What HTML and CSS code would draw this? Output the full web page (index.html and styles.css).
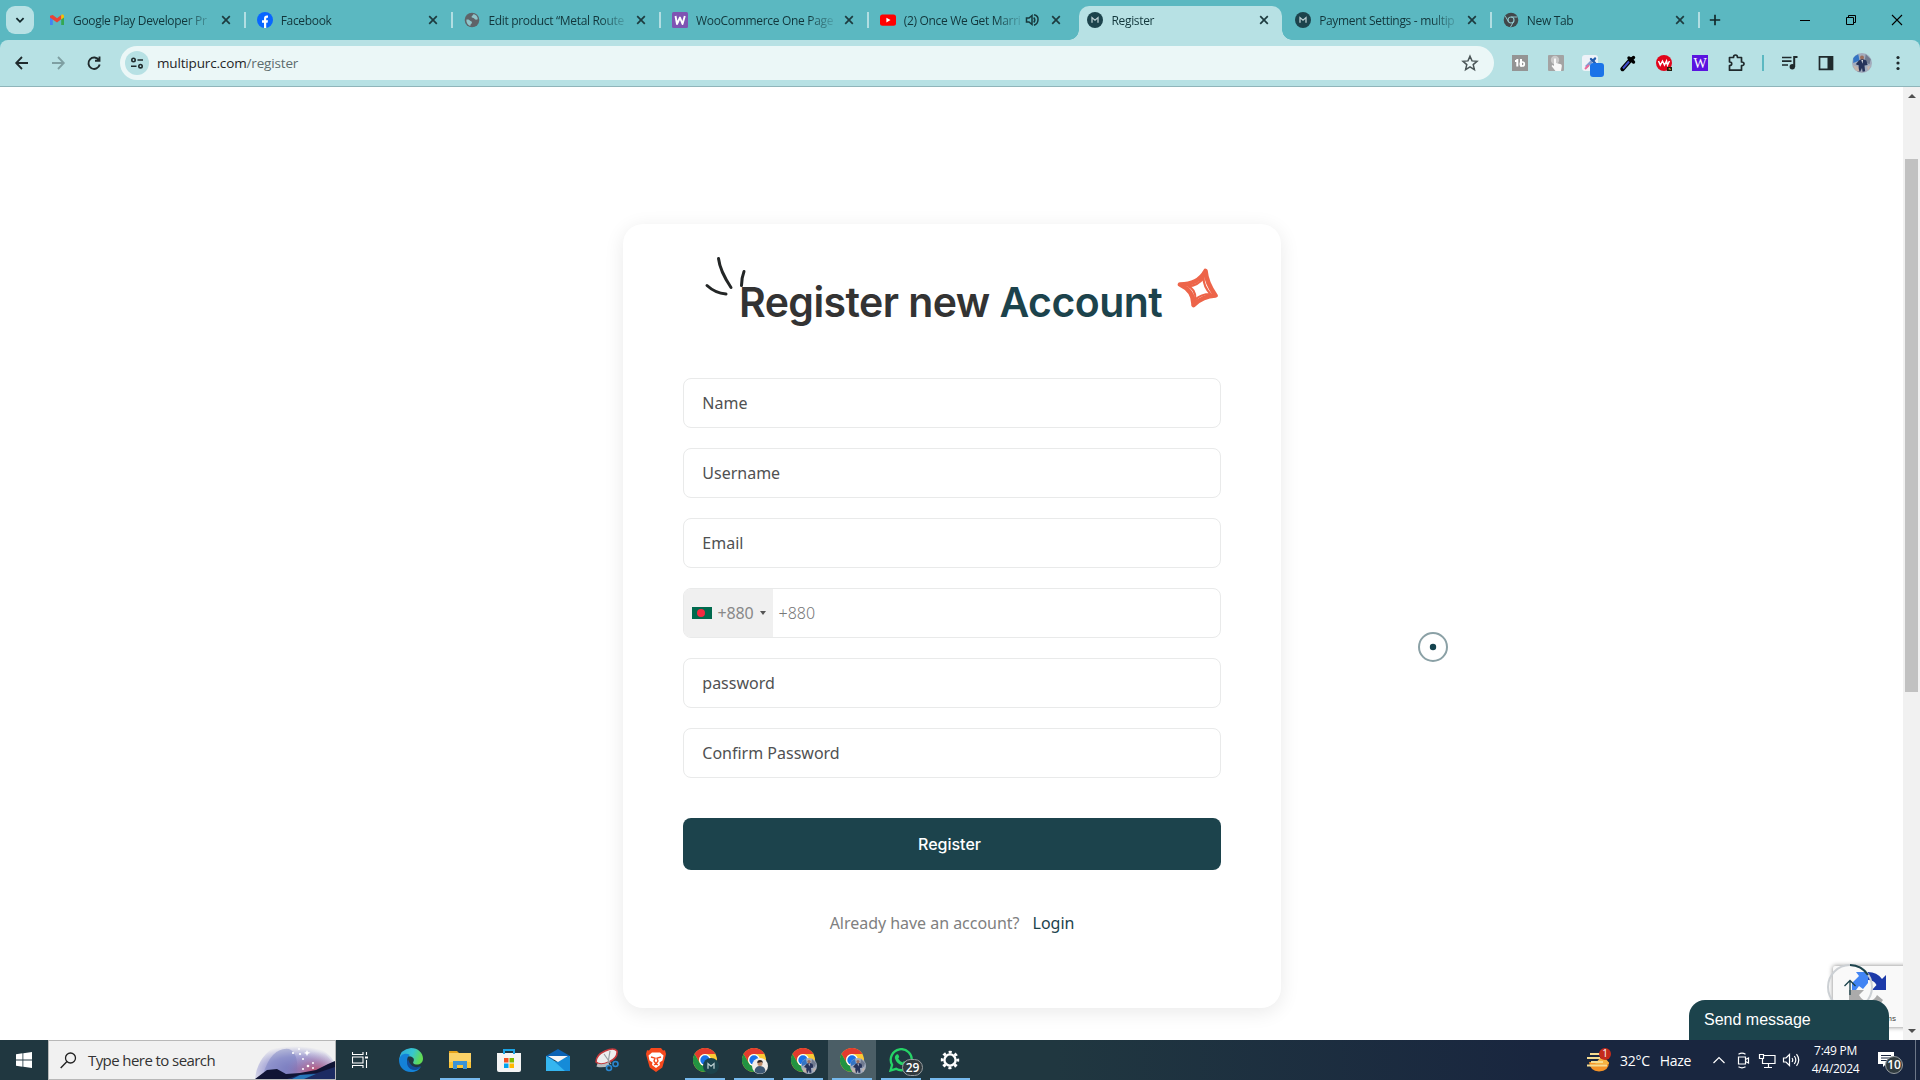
FILE: index.html
```html
<!DOCTYPE html>
<html lang="en">
<head>
<meta charset="utf-8">
<title>Register</title>
<link rel="stylesheet" href="styles.css">
</head>
<body>
<svg class="defs" aria-hidden="true">
  <symbol id="x" viewBox="0 0 16 16"><path d="M4.2 4.2l7.6 7.6M11.8 4.2l-7.6 7.6" stroke="#1d3b3f" stroke-width="1.7" fill="none"/></symbol>
  <symbol id="m" viewBox="0 0 16 16"><circle cx="8" cy="8" r="8" fill="#1c434c"/><path d="M5 10.800V5.600L8 8.200l3-2.600v5.200" fill="none" stroke="#b9cdd0" stroke-width="1.300"/></symbol>
  <symbol id="chrome" viewBox="0 0 24 24">
    <circle cx="12" cy="12" r="12" fill="#fcc934"/>
    <path d="M1.6 6A12 12 0 0 1 22.4 6H12a6 6 0 0 0-5.2 9z" fill="#e33b2e"/>
    <path d="M1.6 6A12 12 0 0 0 12 24l5.2-9A6 6 0 0 1 6.8 15z" fill="#229342"/>
    <circle cx="12" cy="12" r="6" fill="#fff"/><circle cx="12" cy="12" r="4.7" fill="#1a73e8"/>
  </symbol>
  <symbol id="photo" viewBox="0 0 16 16">
    <circle cx="8" cy="8" r="8" fill="#a3acbd"/><path d="M1 4a8 8 0 0 1 4-3l1 5-5 2z" fill="#3474c4"/><path d="M11 1l4 4-1 4-4-2z" fill="#6f7a90"/>
    <path d="M5.500 6l2.500-1.500 3.500 1.500 1 3.500-2.500.5.500 4.500-2 .5-.5-3-1.500 3-2-.5 1-4.500-2.500-1z" fill="#26335a"/><path d="M7.500 5.500h1.300l-.5 3z" fill="#e6e8ee"/><circle cx="8" cy="3.600" r="1.600" fill="#9b6e5d"/><path d="M1 10l4 1 1 4-3-1zM12 11l3-1-2 4z" fill="#c5b3a9"/>
  </symbol>
</svg>

<header class="browser">
  <div class="tabstrip">
    <button class="tabsearch"><svg width="12" height="12" viewBox="0 0 12 12"><path d="M2.4 4.2L6 7.8l3.6-3.6" fill="none" stroke="#12282b" stroke-width="1.8"/></svg></button>
    <div class="tab"><svg class="fav" viewBox="0 0 16 16"><path d="M1 3.5v9.500h2.800V7z" fill="#4285f4"/><path d="M12.2 7v6H15V3.500z" fill="#34a853"/><path d="M1 3.800l2.800-.9L8 6.200l4.200-3.300V7.200L8 10.400 1 5.500z" fill="#ea4335"/><path d="M12.200 2.900c1.200-1 2.800-.4 2.800 1.400v1.200l-2.800 1.900z" fill="#fbbc04"/></svg><span class="title">Google Play Developer Pr</span><svg class="fav"><use href="#x"/></svg><i class="sep"></i></div>
    <div class="tab"><svg class="fav" viewBox="0 0 16 16"><circle cx="8" cy="8" r="8" fill="#0866ff"/><path d="M7 16v-5.300H5V8.300h2V6.700c0-2.500 1.400-3.600 4-3.100v2.100c-1.300-.1-1.800.1-1.800 1.200v1.400H11l-.4 2.400H9.200V16z" fill="#fff"/></svg><span class="title">Facebook</span><svg class="fav"><use href="#x"/></svg><i class="sep"></i></div>
    <div class="tab"><svg class="fav" viewBox="0 0 16 16"><circle cx="8" cy="8" r="7.300" fill="#5f6368"/><path d="M2.500 7.500c2-.3 3 .2 4 1.500 1 .3 1.800 1 1.300 2.200-.7 1-1.500 1-1.500 2.800C3.800 13 2 10.500 2.500 7.500zM9.500 2c-.2 1.800-2 1.500-2 3 .3 1.200 2 .5 2.700 1.600.6 1.200 2 1.400 3.600.6C13.700 4.500 12 2.600 9.500 2z" fill="#8fc5ca"/></svg><span class="title">Edit product “Metal Route</span><svg class="fav"><use href="#x"/></svg><i class="sep"></i></div>
    <div class="tab"><svg class="fav" viewBox="0 0 16 16"><rect width="16" height="16" rx="1.500" fill="#7f54b3"/><path d="M3.500 4l1.500 8 3-6.500L10.500 12 12.800 4" fill="none" stroke="#fff" stroke-width="1.900" stroke-linejoin="round"/></svg><span class="title">WooCommerce One Page</span><svg class="fav"><use href="#x"/></svg><i class="sep"></i></div>
    <div class="tab"><svg class="fav" viewBox="0 0 16 16"><rect y="2.500" width="16" height="11.200" rx="2.500" fill="red"/><path d="M6.400 5.700v4.800L10.500 8z" fill="#fff"/></svg><span class="title">(2) Once We Get Marri</span><svg class="fav audio" viewBox="0 0 16 16"><path d="M2.500 6v4H5l3 2.500v-9L5 6z" fill="none" stroke="#17383c" stroke-width="1.500"/><path d="M9.800 5.500q2 2.500 0 5M10 2.800q4.500 1 4 5.200-.3 4-4 5.200" fill="none" stroke="#17383c" stroke-width="1.500"/></svg><svg class="fav"><use href="#x"/></svg><i class="sep none"></i></div>
    <div class="tab active"><svg class="fav"><use href="#m"/></svg><span class="title">Register</span><svg class="fav"><use href="#x"/></svg><i class="sep none"></i></div>
    <div class="tab"><svg class="fav"><use href="#m"/></svg><span class="title">Payment Settings - multip</span><svg class="fav"><use href="#x"/></svg><i class="sep"></i></div>
    <div class="tab"><svg class="fav" viewBox="0 0 16 16"><circle cx="8" cy="8" r="7.300" fill="#41474a"/><circle cx="8" cy="8" r="3" fill="none" stroke="#8fc5ca" stroke-width="1.200"/><path d="M8 5h6.400M5.400 9.500L2.300 4.200M10.600 9.500L7.500 15" stroke="#8fc5ca"/></svg><span class="title">New Tab</span><svg class="fav"><use href="#x"/></svg><i class="sep"></i></div>
    <svg class="plus" viewBox="0 0 12 12"><path d="M6 .8v10.400M.8 6h10.400" stroke="#12282b" stroke-width="1.700"/></svg>
    <div class="winbtns">
      <svg width="12" height="12" viewBox="0 0 12 12"><path d="M1 6.500h10" stroke="#000"/></svg>
      <svg width="12" height="12" viewBox="0 0 12 12"><path d="M1.500 3.500h7v7h-7zM3.500 3.500v-2h7v7h-2" fill="none" stroke="#000"/></svg>
      <svg width="12" height="12" viewBox="0 0 12 12"><path d="M1 1l10 10M11 1L1 11" stroke="#000" stroke-width="1.100"/></svg>
    </div>
  </div>
  <div class="toolbar">
    <div class="nav">
      <svg viewBox="0 0 16 16"><path d="M14 8H2.500M8 2L2.200 8 8 14" fill="none" stroke="#1f2a2c" stroke-width="1.800"/></svg>
      <svg viewBox="0 0 16 16"><path d="M2 8h11.500M8 2l5.800 6L8 14" fill="none" stroke="#7e9fa2" stroke-width="1.800"/></svg>
      <svg viewBox="0 0 16 16"><path d="M13 5.200A5.700 5.700 0 1 0 13.700 9.500M13.500 1.500v4.300H9" fill="none" stroke="#1f2a2c" stroke-width="1.900"/></svg>
    </div>
    <div class="omnibox">
      <span class="site"><svg width="14" height="14" viewBox="0 0 14 14" fill="none" stroke="#1f2a2c" stroke-width="1.600"><circle cx="3.500" cy="4" r="1.700"/><path d="M7.500 4H13M1 10.200h5.500"/><circle cx="10.500" cy="10.200" r="1.700"/></svg></span>
      <span class="url">multipurc.com<em>/register</em></span>
      <svg width="18" height="18" viewBox="0 0 18 18"><path d="M9 2.200l2 4.700 5 .4-3.800 3.300 1.200 5L9 12.900l-4.400 2.700 1.200-5L2 7.300l5-.4z" fill="none" stroke="#4a5557" stroke-width="1.500"/></svg>
    </div>
    <div class="exts">
      <svg viewBox="0 0 20 20"><rect x="2" y="2" width="16" height="16" fill="#949494"/><path d="M5 8h2.500M7.300 6v7.500M11 6v7.500" fill="none" stroke="#fff" stroke-width="2"/><circle cx="12.300" cy="11" r="2" fill="none" stroke="#fff" stroke-width="1.700"/></svg>
      <svg viewBox="0 0 20 20"><rect x="2" y="2" width="16" height="16" rx="1" fill="#a3a3a3"/><circle cx="9" cy="7" r="4.200" fill="#c9c9c9"/><path d="M8 6q1-1.500 2 0v4l5 1.200q1 .5.800 2L15 18H9.500L5.500 13l1-1 1.500 1z" fill="#f7f7f7"/></svg>
      <svg viewBox="0 0 20 20"><rect x="0" y="2" width="16" height="16" rx="3" fill="#eef2f8"/><path d="M4 14l6-6" stroke="#7d9bd0" stroke-width="2.600"/><path d="M9 6l4 4M11 8l2-2.500" stroke="#235cae" stroke-width="2.400" stroke-linecap="round"/><path d="M3 16l4-4" stroke="#ec6a9c" stroke-width="2"/><rect x="8" y="10" width="14" height="14" rx="3" fill="#1a73e8"/></svg>
      <svg viewBox="0 0 20 20"><path d="M4.500 16L12 7.500" stroke="#000" stroke-width="4.400" stroke-linecap="round"/><path d="M11 5l4.500 4M13.500 6.500l2-2" stroke="#000" stroke-width="3.400" stroke-linecap="round"/><path d="M5 15.500L11 8.500" stroke="#3f4ec9" stroke-width="2"/></svg>
      <svg viewBox="0 0 20 20"><circle cx="10" cy="10" r="8" fill="#e1051b"/><path d="M4.500 8l1.800 4L8.500 8l2 4L12.500 8l1 4L15.500 8" fill="none" stroke="#fff" stroke-width="1.500"/><path d="M13 14h5v4h-5z" fill="#221b10"/><path d="M14 16l2-1 1 2z" fill="#f5c542"/></svg>
      <svg viewBox="0 0 20 20"><rect x="2" y="2" width="16" height="16" fill="#5a14e0"/><text x="10" y="14.600" class="wglyph">W</text></svg>
      <svg viewBox="0 0 20 20"><path d="M3.500 4.500h4q0-2.500 2-2.500t2 2.500h4v4.500q2.500 0 2.500 1.800t-2.500 1.700V17.200h-12v-4.500q2.200-.2 2.200-2T3.500 9z" fill="none" stroke="#1f2a2c" stroke-width="1.700" stroke-linejoin="round"/></svg>
    </div>
    <i class="tbsep"></i>
    <div class="exts right">
      <svg viewBox="0 0 20 20"><path d="M2 4.500h9.500M2 8.200h9.500M2 12h6" stroke="#1f2a2c" stroke-width="1.700"/><path d="M14.200 14V4h3.300" fill="none" stroke="#1f2a2c" stroke-width="2"/><circle cx="12.300" cy="13.800" r="2.700" fill="#1f2a2c"/></svg>
      <svg viewBox="0 0 20 20"><path d="M3.500 3.800h13v12.500h-13z" fill="none" stroke="#1f2a2c" stroke-width="1.700"/><path d="M11.500 3.500H17v13h-5.500z" fill="#1f2a2c"/></svg>
      <svg viewBox="0 0 20 20"><use href="#photo"/></svg>
      <svg viewBox="0 0 20 20"><g fill="#1f2a2c"><circle cx="10" cy="4.500" r="1.600"/><circle cx="10" cy="10" r="1.600"/><circle cx="10" cy="15.500" r="1.600"/></g></svg>
    </div>
  </div>
</header>

<main class="viewport">
  <div class="page">
    <form class="card">
      <h1>
        <svg class="sparks" viewBox="0 0 46 44"><path d="M14.500 2.500Q16 15 27 31.500M40 15.500Q37.500 22 37.500 29.500M3 29.500Q11 37 22 38" fill="none" stroke="#232626" stroke-width="3" stroke-linecap="round"/></svg>
        Register new <b>Account</b>
        <svg class="star" viewBox="0 0 42 42"><path d="M28.500 4Q29.500 16 38.500 28.500 26 29 16.500 38 17 24 3 17.500 21 17.500 28.500 4z" fill="none" stroke="#ed6449" stroke-width="4.600" stroke-linejoin="round"/><path d="M26.500 11Q26.500 19.500 33.500 27 24 27 18.500 32.500 19 22 10.500 19 20 19.500 26.500 11z" fill="none" stroke="#ed6449" stroke-width="2.200"/></svg>
      </h1>
      <div class="field">Name</div>
      <div class="field">Username</div>
      <div class="field">Email</div>
      <div class="field phone">
        <div class="dial"><svg width="20" height="12" viewBox="0 0 20 12"><path fill="#006a4e" d="M0 0h20v12H0z"/><circle cx="9" cy="6" r="4" fill="#f42a41"/></svg><span>+880</span><i class="caret"></i></div>
        <span class="ph">+880</span>
      </div>
      <div class="field">password</div>
      <div class="field">Confirm Password</div>
      <button type="button" class="submit">Register</button>
      <p class="foot">Already have an account? <a>Login</a></p>
    </form>
    <svg class="cursor" viewBox="0 0 30 30"><circle cx="15" cy="15" r="14" fill="none" stroke="#8ba1a6" stroke-width="2"/><circle cx="15" cy="15" r="3.200" fill="#14434e"/></svg>
    <div class="captcha">
      <svg width="38" height="38" viewBox="0 0 38 38"><path d="M19 1q9 0 14 7l4-4v15H23l4.500-5Q25 9 19 9z" fill="#1c3aa9"/><path d="M19 1H7l3 4-7 7 0 7h4l3-4 4 3 5-6z" fill="#4285f4"/><path d="M0 19h15l-5 5q4 7 10 6 6-1 8-6l6 5q-5 9-15 9T4 31l-4 4z" fill="#ababab"/></svg>
      <small>Privacy - Terms</small>
    </div>
    <svg class="progress" viewBox="0 0 46 46"><circle cx="23" cy="23" r="22" fill="none" stroke="#ccd0d4" stroke-width="2"/><path d="M23 1a22 22 0 0 1 18 10" fill="none" stroke="#1c434c" stroke-width="2"/><path d="M23 31V17M17.500 22l5.500-5.500 5.500 5.500" fill="none" stroke="#1c434c" stroke-width="1.300"/></svg>
    <div class="chat">Send message</div>
  </div>
  <div class="scrollbar"><i class="up"></i><i class="thumb"></i><i class="down"></i></div>
</main>

<footer class="taskbar">
  <div class="start"><svg width="16" height="16" viewBox="0 0 16 16" fill="#fff"><path d="M0 2.200l6.500-.9v6.300H0zM7.300 1.200L16 0v7.600H7.300zM0 8.400h6.500v6.300L0 13.800zM7.300 8.400H16V16l-8.700-1.200z"/></svg></div>
  <div class="search">
    <svg width="17" height="17" viewBox="0 0 17 17"><circle cx="10.500" cy="6" r="5" fill="none" stroke="#222" stroke-width="1.300"/><path d="M7 9.500L.7 16" stroke="#222" stroke-width="1.400"/></svg>
    <span>Type here to search</span>
    <svg class="art" viewBox="0 0 80 38" preserveAspectRatio="none">
      <defs>
        <radialGradient id="sky" cx=".5" cy=".75" r=".62"><stop offset="0" stop-color="#7b78bd"/><stop offset=".55" stop-color="#a3a3d6"/><stop offset="1" stop-color="#f1f1f1"/></radialGradient>
        <radialGradient id="glow" cx=".6" cy=".8" r=".6"><stop offset="0" stop-color="#bf4763"/><stop offset="1" stop-color="#a68cc6" stop-opacity="0"/></radialGradient>
      </defs>
      <path d="M0 38Q2 18 18 7 35-4 56 3 74 10 80 22V38z" fill="url(#sky)"/><path d="M8 34Q16 6 34 8q10 4 8 26z" fill="#6f78bb" opacity=".4"/><path d="M30 38V8Q50-2 68 10l12 14v14z" fill="url(#glow)"/>
      <path d="M0 38l12-9 10-1 9 5 14-1 16-3 12-6 7-3V38z" fill="#101434"/><path d="M32 38l12-4 18-2 18-6v12z" fill="#1c2b62"/><path d="M37 38l8-4 16-1-12 5z" fill="#2676b8"/>
      <g fill="#fff"><circle cx="38" cy="12" r="1.100"/><circle cx="44" cy="8" r="1"/><circle cx="45" cy="13" r="1.100"/><circle cx="48" cy="18" r="1"/><circle cx="53" cy="25" r="1.300"/><circle cx="58" cy="22" r="1"/><circle cx="48" cy="28" r="1"/><circle cx="58" cy="27" r="1"/><path d="M52 9l1 2 2.500.8-2.500 1-1 2.200-1-2.200-2-.8 2-1z"/></g>
    </svg>
  </div>
  <div class="apps">
    <div class="app"><svg width="16" height="16" viewBox="0 0 16 16" fill="none" stroke="#fff" stroke-width="1.100"><path d="M.5 0v2.500h10.500V0M.5 5h10.500v6H.5zM.5 16v-2.500h10.500V16M14.500 0v3M14.500 8v8"/><path d="M13 5.500h3" stroke-width="2"/></svg></div>
    <div class="app"><svg viewBox="0 0 24 24"><defs><linearGradient id="eg" x1="0" y1="0" x2="1" y2=".3"><stop offset="0" stop-color="#2aa7dd"/><stop offset=".6" stop-color="#37c6d0"/><stop offset="1" stop-color="#61db55"/></linearGradient></defs><path d="M12 0c7 0 12 5 12 10.500 0 4-3 6-6 6-3.500 0-4.500-1.500-3.500-3Q16 10 12 8.500 4 7 0 12 1 1 12 0z" fill="url(#eg)"/><path d="M0 12c1-6 7-7.500 11-5-4 2-4 9 1 12 4 2 8 1 10-.5C19 24 14 24 12 24 4 24 0 18 0 12z" fill="#1482d8"/><path d="M9 11c-3 5 1 12 8 11q3-1 5-4c-6 3-11 0-13-7z" fill="#124b98"/></svg></div>
    <div class="app open"><svg viewBox="0 0 24 24"><path d="M1 3h8l2 2H1z" fill="#e5a219"/><path d="M1 5h22v14H1z" fill="#fad167"/><path d="M1 14h22v6H1z" fill="#fbc437"/><path d="M5 13h14v8h-4v-4H9v4H5z" fill="#3c93d8"/></svg></div>
    <div class="app"><svg viewBox="0 0 24 24"><path d="M7 6V2h10v4" fill="none" stroke="#1ba4e6" stroke-width="2"/><path d="M0 5h24v17q0 2-2 2H2q-2 0-2-2z" fill="#f4f4f4"/><path d="M7 5v1M17 5v1" stroke="#1ba4e6" stroke-width="2"/><path d="M7 10h4.500v4.500H7z" fill="#f25022"/><path d="M12.500 10H17v4.500h-4.500z" fill="#7fba00"/><path d="M7 15.500h4.500V20H7z" fill="#00a4ef"/><path d="M12.500 15.500H17V20h-4.500z" fill="#ffb900"/></svg></div>
    <div class="app"><svg viewBox="0 0 24 24"><path d="M0 8L12 1l12 7v4H0z" fill="#0b62b4"/><path d="M0 8l12 7 12-7v15H0z" fill="#35b6f0"/><path d="M24 8v15H19L9 14z" fill="#158bd8"/><path d="M2 8h20l-10 6z" fill="#f6f6f6"/></svg></div>
    <div class="app"><svg viewBox="0 0 24 24"><path d="M1 14q0-7 9-11t12 0q1 7-8 11T1 14z" fill="#eee" stroke="#c5393c" stroke-width="1.600"/><path d="M2 17q5 2 12-1" stroke="#b7bcbf" stroke-width="3" fill="none"/><path d="M9 6l7 10M15 3l-2 12" stroke="#9a9fa3" stroke-width="1.200"/><circle cx="14" cy="20" r="2.500" fill="none" stroke="#2a87d0" stroke-width="1.600"/><circle cx="20.500" cy="16" r="2.500" fill="none" stroke="#2a87d0" stroke-width="1.600"/></svg></div>
    <div class="app"><svg viewBox="0 0 24 24"><path d="M7 0h10l2 2.500 2-.3L22 6l-.7 3-3 10.500L12 24l-6.300-4.500L2.700 9 2 6l1-3.800 2 .3z" fill="#f5481d"/><path d="M8 4.500h8l3.500 3-1 5-3 2 .5 2.500L12 20l-4-3 .5-2.500-3-2-1-5z" fill="#fff"/><path d="M7 9l4 1.200L10 13 12 16l2-3-1-2.800L17 9M10 17l2-1.200 2 1.200" fill="none" stroke="#f5481d" stroke-width="1.400"/></svg></div>
    <div class="app open"><svg viewBox="0 0 24 24"><use href="#chrome"/></svg><svg class="badge"><use href="#m"/></svg></div>
    <div class="app open"><svg viewBox="0 0 24 24"><use href="#chrome"/></svg><svg class="badge" viewBox="0 0 16 16"><circle cx="8" cy="8" r="8" fill="#f2eee9"/><path d="M2.500 13.500Q3 8 8 8t5.500 5.500Q8 18 2.500 13.500z" fill="#3d5874"/><circle cx="8" cy="5.500" r="2.500" fill="#c08d69"/><path d="M5.300 5Q5 2 8 2t2.700 3L9.500 4z" fill="#2c2320"/></svg></div>
    <div class="app open"><svg viewBox="0 0 24 24"><use href="#chrome"/></svg><svg class="badge"><use href="#photo"/></svg></div>
    <div class="app open current"><svg viewBox="0 0 24 24"><use href="#chrome"/></svg><svg class="badge"><use href="#photo"/></svg></div>
    <div class="app open"><svg viewBox="0 0 24 24"><path d="M1.500 22.500l1.600-5.700a10.500 10.500 0 1 1 4 4z" fill="none" stroke="#25d366" stroke-width="2.300"/><path d="M7.500 6.500q1.500-1 2.200 1l.5 1.500-1 1.500q1.500 3 4.500 4l1.300-1.500 2.500 1.200q.2 3-3 3.300-7-1-8.700-7.500-.1-2.500 1.700-3.500z" fill="#25d366"/></svg><b class="count">29</b></div>
    <div class="app open"><svg viewBox="0 0 24 24"><circle cx="12" cy="12" r="5.600" fill="none" stroke="#fff" stroke-width="2.400"/><circle cx="12" cy="12" r="7.800" fill="none" stroke="#fff" stroke-width="2.800" stroke-dasharray="3.060 3.060" stroke-dashoffset="1.530"/></svg></div>
  </div>
  <div class="tray">
    <div class="weather">
      <svg width="24" height="24" viewBox="0 0 24 24"><path d="M2 14h20q0 9-10 9.500Q3 23 2 14z" fill="#f59327"/><path d="M13 10q8 0 9 6H8z" fill="#f6b340"/><path d="M3 6h10M0 10h13M4 14h12M0 17.500h20" stroke="#f6dc90" stroke-width="1.800"/><circle cx="18" cy="6" r="6" fill="#c42b1c"/><text x="18" y="9.200" class="one">1</text></svg>
      <span>32°C</span><span>Haze</span>
    </div>
    <div class="trayicons">
      <svg viewBox="0 0 18 18"><path d="M3.500 12L9 6.500l5.500 5.500"/></svg>
      <svg viewBox="0 0 18 18"><path d="M4.500 6h7v7h-7zM11.500 8.500l3-1.500v5l-3-1.500M4.500 3.200q3.500-2 7 0M4.500 15.800q3.500 2 7 0"/></svg>
      <svg viewBox="0 0 18 18"><path d="M5.500 4.500H17v8H4.500V8M1.500 3.500h4v4h-4zM10.500 12.500v3.500M6 16.500h8"/></svg>
      <svg viewBox="0 0 18 18"><path d="M1.500 7h2.500l3.500-3.500v11L4 11H1.500zM10 7q1.500 2 0 4M12.300 5q3 4 0 8M14.500 3.200q4.500 5.800 0 11.600"/></svg>
    </div>
    <div class="clock"><span>7:49 PM</span><span>4/4/2024</span></div>
    <div class="note"><svg width="18" height="18" viewBox="0 0 18 18"><path d="M1 1h16v12H9l-3 3v-3H1z" fill="#fff"/><path d="M4 4.500h10M4 7h10M4 9.500h7" stroke="#19253f"/></svg><b class="count">10</b></div>
    <i class="peek"></i>
  </div>
</footer>
</body>
</html>
```
FILE: styles.css
```css
* { box-sizing: border-box; }
html, body { margin: 0; height: 100%; overflow: hidden; }
body { width: 1920px; height: 1080px; display: flex; flex-direction: column; background: #fff; font-family: "Open Sans", "Noto Sans", sans-serif; }
svg { display: block; flex: none; }
button { border: 0; padding: 0; font: inherit; }
.defs { display: none; }

/* browser chrome */
.browser { flex: none; height: 87px; background: #5bb8c1; }
.tabstrip { height: 40px; display: flex; align-items: center; }
.tabsearch { width: 28px; height: 28px; margin: 0 3px 0 6px; border-radius: 9px; background: #b7e1e4; display: grid; place-items: center; flex: none; }
.tab { position: relative; width: 207.700px; height: 40px; flex: none; display: flex; align-items: center; padding-left: 12px; color: #12363b; }
.tab > * { position: relative; }
.fav { width: 16px; height: 16px; }
.title { flex: 1; margin: 1px 4px 0 8px; font-size: 12px; letter-spacing: -.32px; white-space: nowrap; -webkit-mask-image: linear-gradient(90deg, #000 112px, rgba(0,0,0,.15) 138px); mask-image: linear-gradient(90deg, #000 112px, rgba(0,0,0,.15) 138px); }
.title:has(+ .audio) { -webkit-mask-image: linear-gradient(90deg, #000 92px, rgba(0,0,0,.2) 116px); mask-image: linear-gradient(90deg, #000 92px, rgba(0,0,0,.2) 116px); }
.audio { margin-right: 8px; }
.sep { width: 2px; height: 16px; margin: 0 -1px 0 10px; background: #b1dee2; }
.sep.none { background: none; }
.active::before { content: ""; position: absolute; left: 4px; right: 1.500px; top: 6px; bottom: 0; background: #b7e1e4; border-radius: 10px 10px 0 0; }
.active::after { content: ""; position: absolute; left: -6px; right: -8.500px; bottom: 0; height: 10px; background: radial-gradient(circle at 0 0, transparent 9.500px, #b7e1e4 10px) left / 10px 10px no-repeat, radial-gradient(circle at 100% 0, transparent 9.500px, #b7e1e4 10px) right / 10px 10px no-repeat; }
.plus { width: 12px; height: 12px; margin-left: 10px; }
.winbtns { display: flex; gap: 34px; margin: 0 17px 0 auto; }
.toolbar { height: 47px; display: flex; align-items: center; background: #b7e1e4; border-radius: 8px 8px 0 0; border-bottom: 1px solid #8fb5ba; }
.nav { display: flex; gap: 20px; padding: 0 18px 0 14px; }
.nav svg { width: 16px; height: 16px; }
.omnibox { width: 1374px; height: 34px; border-radius: 17px; background: #ebf7f7; display: flex; align-items: center; padding: 0 15px 0 5px; }
.site { width: 24px; height: 24px; border-radius: 50%; background: #b7e1e4; display: grid; place-items: center; }
.url { flex: 1; margin-left: 8px; font-size: 13.500px; letter-spacing: -.16px; color: #1f2527; }
.url em { font-style: normal; color: #5d6c6e; }
.exts { display: flex; gap: 16px; margin-left: 16px; }
.exts svg { width: 20px; height: 20px; overflow: visible; }
.wglyph { font: 14px "Liberation Serif", serif; fill: #fff; text-anchor: middle; }
.tbsep { width: 2px; height: 16px; background: #5bb8c1; margin-left: 16px; }

/* page */
.viewport { flex: 1; display: flex; min-height: 0; }
.page { position: relative; flex: 1; overflow: hidden; background: #fff; }
.card { width: 658px; height: 784px; margin: 137px 0 0 623px; padding: 50px 60px 0; border-radius: 20px; background: #fff; box-shadow: 0 4px 20px rgba(0,0,0,.09); }
h1 { position: relative; width: max-content; margin: 0 0 49px 56px; height: 55px; font: 600 41px/57px Inter, sans-serif; letter-spacing: -.56px; color: #333; white-space: nowrap; }
h1 b { font-weight: 600; color: #1c434c; }
.sparks { position: absolute; left: -35px; top: -18px; width: 46px; height: 44px; }
.star { position: absolute; left: 438px; top: -7px; width: 42px; height: 42px; }
.field { height: 50px; margin-bottom: 20px; border: 1px solid #e9eaea; border-radius: 8px; padding: 0 18.300px; font: 400 16px/48px "Noto Sans", sans-serif; color: #505152; }
.phone { display: flex; padding: 0; }
.dial { width: 89px; background: #f0f0f0; border-radius: 6px 0 0 6px; display: flex; align-items: center; padding-left: 8px; color: #888; }
.dial span { margin-left: 5.500px; letter-spacing: -.15px; }
.caret { border: 3px solid transparent; border-top: 4px solid #555; border-bottom: 0; margin-left: 6px; }
.ph { margin-left: 5.500px; font-weight: 300; color: #777; }
.submit { display: block; width: 100%; height: 52px; margin-top: 40px; border-radius: 8px; background: #1c434c; color: #fff; font: 500 16px Inter, sans-serif; padding-right: 5px; letter-spacing: 0; }
.foot { margin: 41px 0 0; text-align: center; font: 400 16px/24px "Noto Sans", sans-serif; letter-spacing: -.03px; color: #808080; }
.foot a { margin-left: 9px; color: #1c434c; }
.cursor { position: absolute; left: 1418px; top: 545px; width: 30px; height: 30px; }
.captcha { position: absolute; left: 1833px; top: 879px; width: 80px; height: 61px; background: #f9f9f9; box-shadow: 0 0 5px #808080; border-radius: 2px; padding: 5px 0 0 16px; }
.captcha small { display: block; margin: 5px 0 0 -8px; font: 8px "Liberation Sans", sans-serif; color: #444; white-space: nowrap; }
.progress { position: absolute; left: 1827px; top: 877px; width: 46px; height: 46px; }
.chat { position: absolute; left: 1689px; bottom: 0; width: 200px; height: 40px; border-radius: 16px 16px 0 0; background: #1c434c; color: #fff; padding-left: 15px; font: 16px/39px "Liberation Sans", Arial, sans-serif; }
.scrollbar { width: 17px; background: #f1f1f1; display: flex; flex-direction: column; align-items: center; }
.up, .down { border: 4px solid transparent; }
.up { border-top: 0; border-bottom-color: #505050; margin: 7px 0 61px; }
.thumb { width: 13px; height: 533px; background: #c1c1c1; }
.down { border-bottom: 0; border-top-color: #505050; margin-top: auto; margin-bottom: 7px; }

/* taskbar */
.taskbar { flex: none; height: 40px; display: flex; background: linear-gradient(90deg, #203740 0 55%, #19263f 80%); color: #fff; }
.start { width: 48px; display: grid; place-items: center; }
.search { width: 288px; background: #f1f1f1; border: 1px solid #b8b8b8; display: flex; align-items: center; padding-left: 11px; color: #333; }
.search span { margin-left: 11px; font-size: 15px; letter-spacing: -.58px; flex: 1; white-space: nowrap; }
.art { width: 80px; height: 38px; }
.apps { display: flex; }
.app { position: relative; width: 49px; display: grid; place-items: center; }
.app:first-child { width: 50px; padding-right: 2px; }
.app > svg:not([width]) { width: 24px; height: 24px; }
.app.open::after { content: ""; position: absolute; left: 5px; bottom: 0; width: 40px; height: 2px; background: #76b9ed; }
.app.current::before { content: ""; position: absolute; inset: 0 0 0 1px; background: #4b5e66; }
.app.current svg { position: relative; }
.app > svg.badge:not([width]), .app.current > svg.badge { position: absolute; left: 23px; top: 18px; width: 16px; height: 16px; }
.count { position: absolute; left: 26px; top: 19px; width: 21px; height: 17px; border: 1px solid #989da0; border-radius: 9px; background: #303a3e; font: 600 12px/15px "Open Sans", sans-serif; text-align: center; color: #fff; }
.tray { margin-left: auto; display: flex; align-items: center; height: 40px; }
.weather { display: flex; align-items: center; font-size: 14px; letter-spacing: -.3px; margin-right: 33px; }
.weather span { margin-left: 9px; white-space: nowrap; }
.weather span + span { margin-left: 10px; }
.one { font: 10px "Open Sans", sans-serif; fill: #fff; text-anchor: middle; }
.trayicons { display: flex; gap: 6px; margin-left: -14px; }
.trayicons svg { width: 18px; height: 18px; fill: none; stroke: #fff; stroke-width: 1.200; }
.clock { width: 71px; text-align: center; display: flex; flex-direction: column; font-size: 12px; line-height: 18px; letter-spacing: -.3px; }
.note { position: relative; width: 44px; padding-left: 6px; }
.note .count { left: 14px; top: 5px; width: 18px; height: 18px; }
.peek { width: 1px; height: 40px; background: #6d7788; margin-right: 4px; }
```
